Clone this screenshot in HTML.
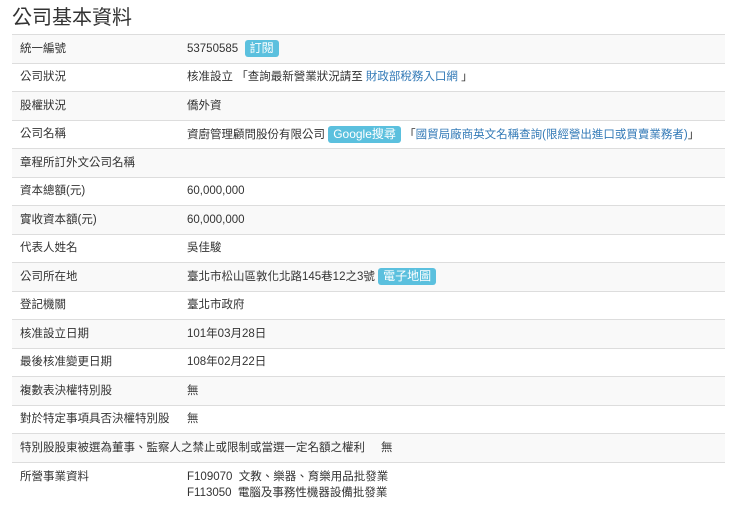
<!DOCTYPE html>
<html><head><meta charset="utf-8"><style>
body{margin:0;background:#fff;font-family:"Liberation Sans","Noto Sans CJK TC",sans-serif;color:#333;width:740px;height:502px;overflow:hidden}
h1{font-size:20px;font-weight:normal;margin:0;position:absolute;left:12px;top:5px;line-height:26px;color:#333}
table{position:absolute;left:12px;top:34px;width:713px;border-collapse:collapse;font-size:11.5px}
td{border-top:1px solid #ddd;height:27.5px;padding:0 0 0 8px;vertical-align:middle;line-height:16px}
td.l{width:159px}
tr:nth-child(odd) td{background:#f9f9f9}
.b{display:inline-block;background:#5bc0de;color:#fff;border-radius:3px;padding:1px 5px;font-size:12px;line-height:15px}
a{color:#337ab7;text-decoration:none}
.last td{vertical-align:top;padding-top:6px;height:40px}
</style></head><body>
<h1>公司基本資料</h1>
<table>
<tr><td class="l">統一編號</td><td>53750585 &nbsp;<span class="b">訂閱</span></td></tr>
<tr><td class="l">公司狀況</td><td>核准設立 「查詢最新營業狀況請至 <a>財政部稅務入口網</a> 」</td></tr>
<tr><td class="l">股權狀況</td><td>僑外資</td></tr>
<tr><td class="l">公司名稱</td><td>資廚管理顧問股份有限公司 <span class="b">Google搜尋</span> 「<a>國貿局廠商英文名稱查詢(限經營出進口或買賣業務者)</a>」</td></tr>
<tr><td class="l">章程所訂外文公司名稱</td><td></td></tr>
<tr><td class="l">資本總額(元)</td><td>60,000,000</td></tr>
<tr><td class="l">實收資本額(元)</td><td>60,000,000</td></tr>
<tr><td class="l">代表人姓名</td><td>吳佳駿</td></tr>
<tr><td class="l">公司所在地</td><td>臺北市松山區敦化北路145巷12之3號 <span class="b">電子地圖</span></td></tr>
<tr><td class="l">登記機關</td><td>臺北市政府</td></tr>
<tr><td class="l">核准設立日期</td><td>101年03月28日</td></tr>
<tr><td class="l">最後核准變更日期</td><td>108年02月22日</td></tr>
<tr><td class="l">複數表決權特別股</td><td>無</td></tr>
<tr><td class="l">對於特定事項具否決權特別股</td><td>無</td></tr>
<tr><td colspan="2">特別股股東被選為董事、監察人之禁止或限制或當選一定名額之權利 &nbsp; &nbsp; 無</td></tr>
<tr class="last"><td class="l">所營事業資料</td><td>F109070 &nbsp;文教、樂器、育樂用品批發業<br>F113050 &nbsp;電腦及事務性機器設備批發業</td></tr>
</table>
</body></html>
